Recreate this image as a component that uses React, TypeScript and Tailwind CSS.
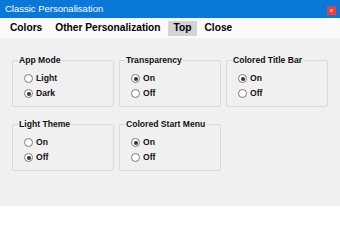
import { useState } from "react"

const font = { fontFamily: '"Liberation Sans", Arial, sans-serif' }

interface RadioProps {
    label: string
    checked: boolean
    onClick: () => void
}

const Radio: React.FC<RadioProps> = ({ label, checked, onClick }) => (
    <button onClick={onClick} className="flex items-center h-[15px] gap-[3px] text-[8.6px] font-bold text-[#111]">
        <span className="w-[9px] h-[9px] rounded-full border border-[#7a7a7a] bg-white flex items-center justify-center">
            {checked && <span className="w-[4px] h-[4px] rounded-full bg-[#333]" />}
        </span>
        {label}
    </button>
)

interface GroupProps {
    title: string
    options: string[]
    value: string
    onChange: (v: string) => void
}

const Group: React.FC<GroupProps> = ({ title, options, value, onChange }) => (
    <fieldset className="w-[102px] border border-[#d9d9d9] rounded-[2px] px-[5px] pb-[5px]">
        <legend className="px-[1px] text-[8.6px] leading-[11px] font-bold text-[#111]">{title}</legend>
        <div className="flex flex-col pl-[6px] pt-[5px]">
            {options.map(o => (
                <Radio key={o} label={o} checked={value === o} onClick={() => onChange(o)} />
            ))}
        </div>
    </fieldset>
)

const menuItems = ["Colors", "Other Personalization", "Top", "Close"]

export default function App() {
    const [appMode, setAppMode] = useState("Dark")
    const [transparency, setTransparency] = useState("On")
    const [titleBar, setTitleBar] = useState("On")
    const [lightTheme, setLightTheme] = useState("Off")
    const [startMenu, setStartMenu] = useState("On")

    return (
        <div style={font} className="w-[340px] h-[206px] bg-[#f0f0f0] flex flex-col overflow-hidden">
            <div className="h-[18px] bg-[#0a78d7] flex justify-between">
                <span className="pl-[5px] text-[9.5px] leading-[18px] text-white">Classic Personalisation</span>
                <span className="self-end mb-[3px] mr-[4px] w-[9px] h-[9px] bg-[#e04343] text-white text-[6px] leading-[8px] text-center">x</span>
            </div>
            <div className="h-[20px] bg-[#fafafa] flex items-center pl-[4px] gap-[1px]">
                {menuItems.map(m => (
                    <span
                        key={m}
                        className={`${m === "Top" ? "bg-[#d4d4d4]" : ""} h-[15px] px-[6px] flex items-center text-[10.2px] font-bold text-black`}
                    >
                        {m}
                    </span>
                ))}
            </div>
            <div className="flex flex-col gap-[12px] pl-[12px] pt-[17px]">
                <div className="flex gap-[5px]">
                    <Group title="App Mode" options={["Light", "Dark"]} value={appMode} onChange={setAppMode} />
                    <Group title="Transparency" options={["On", "Off"]} value={transparency} onChange={setTransparency} />
                    <Group title="Colored Title Bar" options={["On", "Off"]} value={titleBar} onChange={setTitleBar} />
                </div>
                <div className="flex gap-[5px]">
                    <Group title="Light Theme" options={["On", "Off"]} value={lightTheme} onChange={setLightTheme} />
                    <Group title="Colored Start Menu" options={["On", "Off"]} value={startMenu} onChange={setStartMenu} />
                </div>
            </div>
        </div>
    )
}
